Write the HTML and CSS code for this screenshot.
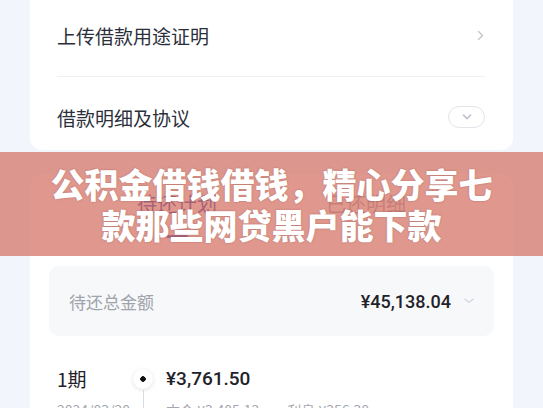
FILE: index.html
```html
<!DOCTYPE html>
<html lang="zh-CN">
<head>
  <meta charset="UTF-8" />
  <meta name="viewport" content="width=device-width, initial-scale=1.0"/>
  <title>公积金借钱借钱</title>
  <link rel="stylesheet" href="styles.css">
</head>
<body>
  <div class="page">
    <!-- loan info card -->
    <div class="card top-card">
      <div class="row row-first">
        <span>上传借款用途证明</span>
        <svg class="arrow" width="7" height="11" viewBox="0 0 7 11"><path d="M1.5 1.5 L5.5 5.5 L1.5 9.5" fill="none" stroke="#c3c6cf" stroke-width="1.4" stroke-linecap="round" stroke-linejoin="round"/></svg>
      </div>
      <div class="row row-second">
        <span>借款明细及协议</span>
        <span class="pill">
          <svg width="10" height="6" viewBox="0 0 10 6"><path d="M1.5 1.2 L5 4.6 L8.5 1.2" fill="none" stroke="#c4c7d1" stroke-width="1.8" stroke-linecap="round" stroke-linejoin="round"/></svg>
        </span>
      </div>
    </div>

    <!-- repayment plan card -->
    <div class="card plan-card">
      <div class="tabs">
        <div class="tab active">
          <span>待还计划</span>
          <i class="bar"></i>
        </div>
        <div class="tab">
          <span>已还明细</span>
        </div>
      </div>

      <div class="total">
        <span class="total-label">待还总金额</span>
        <span class="total-value">
          ¥45,138.04
          <svg width="10" height="6" viewBox="0 0 10 6"><path d="M1 1.2 L5 4.4 L9 1.2" fill="none" stroke="#cfd2d9" stroke-width="1.2" stroke-linecap="round" stroke-linejoin="round"/></svg>
        </span>
      </div>

      <div class="period">
        <span class="period-name">1期</span>
        <span class="dot-col"><i class="dot"></i></span>
        <span class="period-amount">¥3,761.50</span>
        <span class="period-date">2024/03/20</span>
        <span class="line-col"><i class="line"></i></span>
        <span class="period-detail">本金 ¥3,405.12<em>利息 ¥356.38</em></span>
      </div>
    </div>
  </div>

  <div class="banner">公积金借钱借钱，精心分享七<br>款那些网贷黑户能下款</div>
</body>
</html>
```

FILE: styles.css
```css
body {
  margin: 0;
  background-color: #f2f5fb;
  font-family: "Noto Sans CJK SC", "Noto Sans", sans-serif;
  color: #2b2f3b;
  overflow: hidden;
}
.page {
  padding: 0 30px;
}
.card {
  background-color: #ffffff;
  border-radius: 12px;
}
.top-card {
  border-radius: 0 0 12px 12px;
  padding: 0 28px 0 27px;
  height: 150px;
}
.row {
  display: flex;
  align-items: center;
  justify-content: space-between;
  font-size: 19px;
}
.row-first {
  height: 77px;
  padding-bottom: 6px;
  box-sizing: border-box;
  border-bottom: 1px solid #eef0f3;
}
.row-first .arrow {
  margin-right: 1px;
}
.row-second {
  height: 72px;
  padding-top: 8px;
  box-sizing: border-box;
}
.pill {
  width: 35px;
  height: 20px;
  border: 1px solid #e3e5eb;
  border-radius: 11px;
  display: flex;
  align-items: center;
  justify-content: center;
}
.plan-card {
  margin-top: 24px;
  padding: 0 19px;
  height: 260px;
}
.tabs {
  display: flex;
  justify-content: center;
  height: 73px;
}
.tab {
  width: 189px;
  display: flex;
  flex-direction: column;
  align-items: center;
  padding-top: 19px;
  font-size: 20px;
  line-height: 22px;
  color: #9a9ca6;
}
.tab.active {
  color: #1e2a9a;
}
.bar {
  display: block;
  width: 22px;
  height: 3px;
  border-radius: 2px;
  background-color: #2a3bd0;
  margin-top: 20px;
}
.total {
  margin-top: 19px;
  height: 70px;
  background-color: #f7f8fa;
  border-radius: 10px;
  padding: 0 20px;
  display: flex;
  align-items: center;
  justify-content: space-between;
}
.total-label {
  font-size: 17px;
  color: #a0a3ab;
}
.total-value {
  font-family: Roboto, sans-serif;
  font-weight: 500;
  font-size: 18px;
  color: #1f2229;
  display: flex;
  align-items: center;
  gap: 13px;
}
.period {
  margin-top: 28px;
  padding-left: 8px;
  display: grid;
  grid-template-columns: 76px 20px 1fr;
  grid-template-rows: 30px 20px;
  row-gap: 6px;
}
.period-name {
  font-size: 19px;
  line-height: 30px;
  color: #1f2229;
}
.dot-col, .line-col {
  display: flex;
  flex-direction: column;
  align-items: center;
}
.dot-col {
  justify-content: center;
  position: relative;
}
.dot {
  width: 20px;
  height: 20px;
  border-radius: 50%;
  background: #ffffff radial-gradient(circle, #111 0 2.5px, transparent 3px);
  box-shadow: 0 1px 4px rgba(0, 0, 0, 0.12);
}
.dot-col::after {
  content: "";
  position: absolute;
  top: 26px;
  bottom: -6px;
  left: 9.5px;
  width: 1px;
  background-color: #d6dae1;
}
.line {
  width: 1px;
  height: 100%;
  background-color: #d6dae1;
}
.period-amount {
  margin-left: 13px;
  font-family: Roboto, sans-serif;
  font-weight: 500;
  font-size: 19px;
  line-height: 30px;
  color: #1f2229;
}
.period-date, .period-detail {
  font-size: 14px;
  line-height: 20px;
  color: #a4a7af;
}
.period-detail {
  margin-left: 13px;
}
.period-detail em {
  font-style: normal;
  margin-left: 28px;
}
.banner {
  position: absolute;
  left: 0;
  right: 0;
  top: 152px;
  height: 104px;
  box-sizing: border-box;
  padding-top: 11px;
  background-color: rgba(214, 118, 104, 0.75);
  color: #ffffff;
  font-weight: 900;
  font-size: 34px;
  line-height: 41px;
  text-align: center;
  text-shadow: 0 0 2px rgba(80, 30, 20, 0.35);
}
```
